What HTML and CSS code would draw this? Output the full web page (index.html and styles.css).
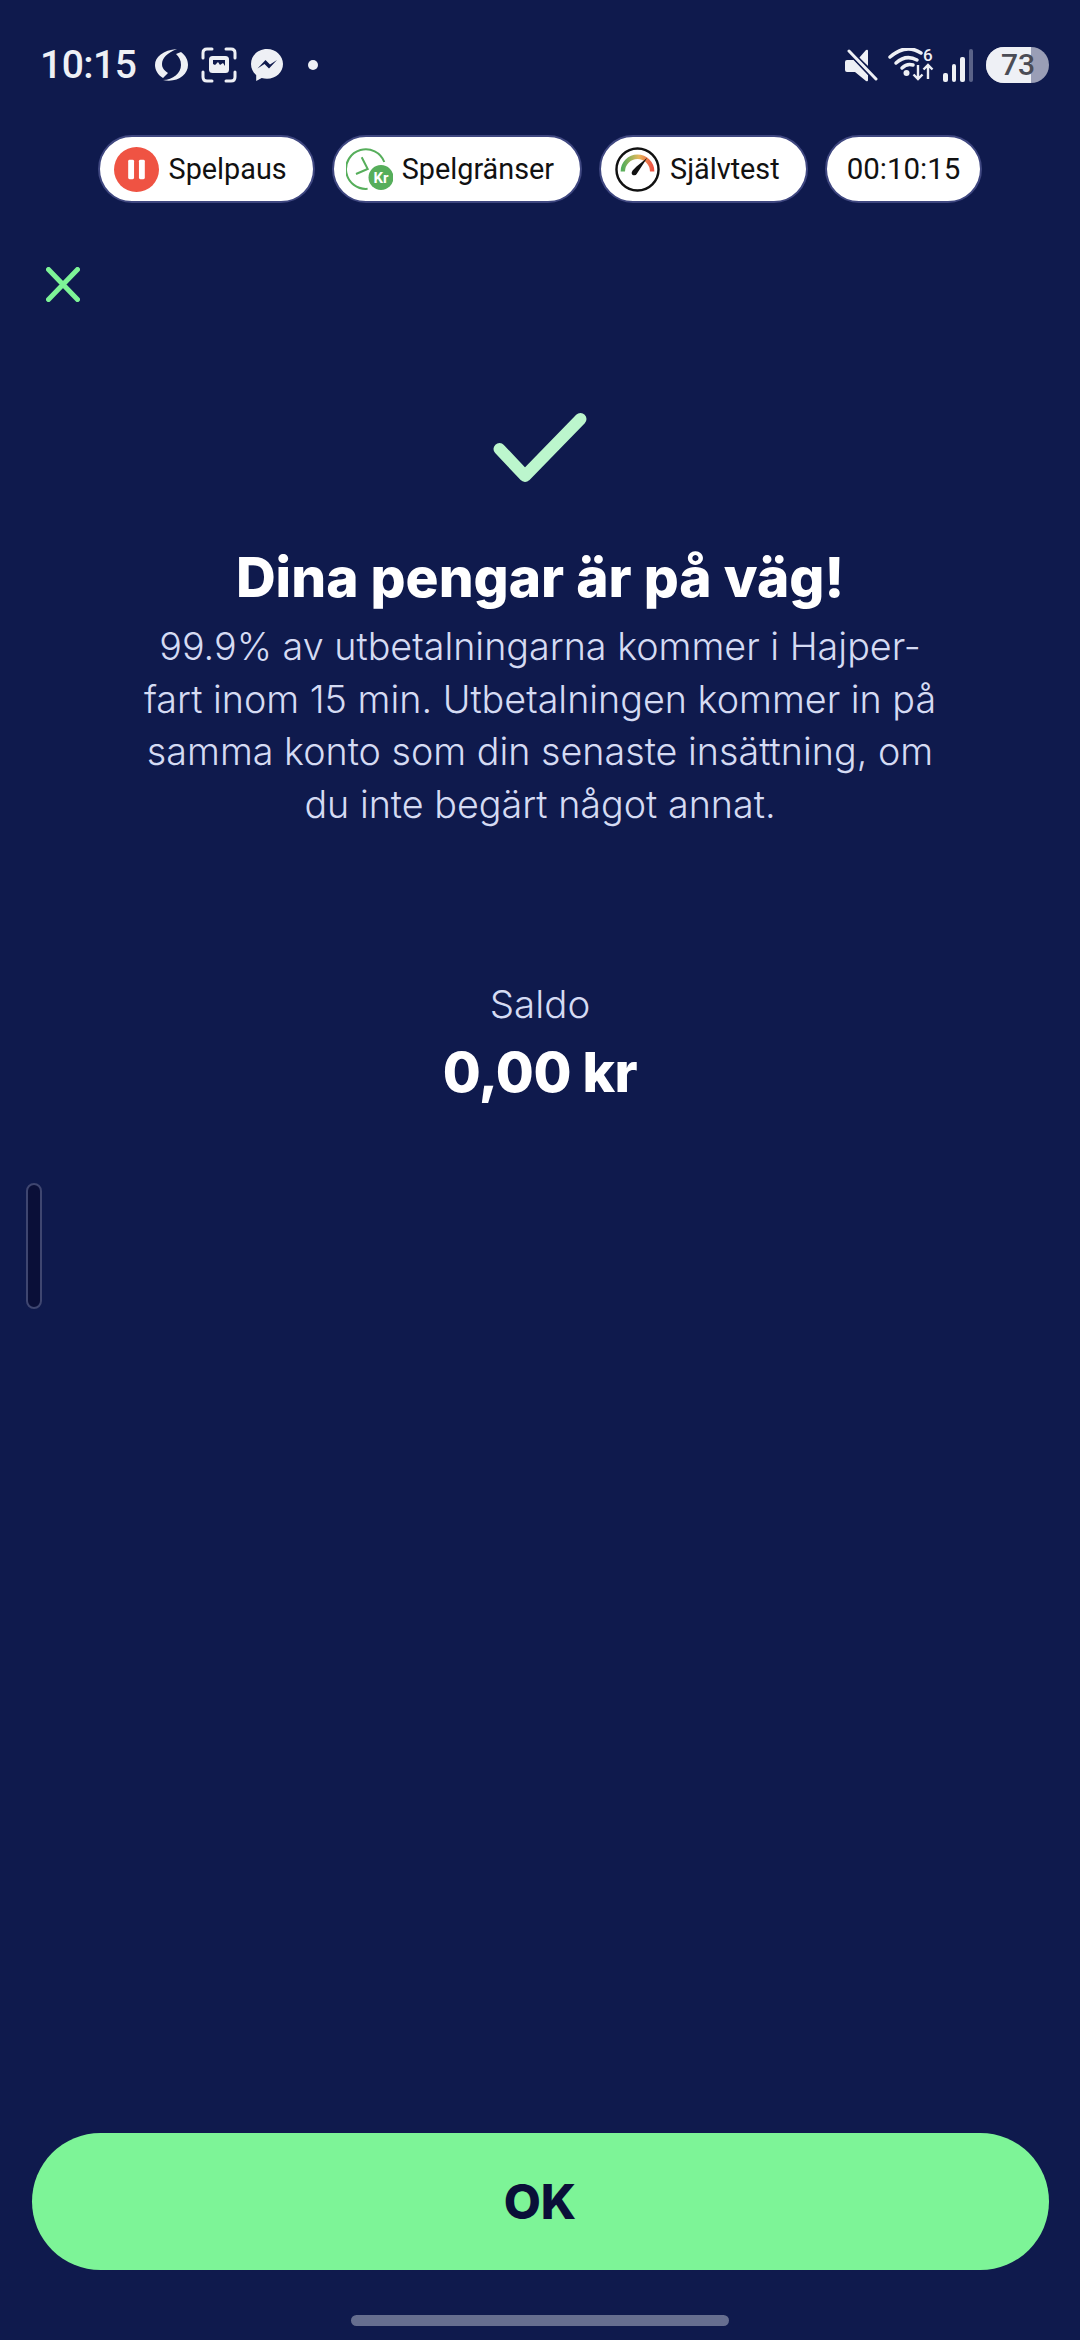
FILE: index.html
```html
<!doctype html>
<html lang="sv">
<head>
    <meta charset="UTF-8">
    <title>Dina pengar är på väg</title>
    <link rel="stylesheet" href="styles.css">
</head>
<body>
<div class="screen">
    <div class="status">
        <div class="status-left">
            <span class="clock">10:15</span>
            <svg class="ic-sync" viewBox="0 0 33 33">
                <path d="M22 0C8 1 0 8 0 16c0 5 3 10 8 13l5-5c-4-3-6-5-6-9C7 9 12 4 22 0z" fill="#eef0f5"/>
                <path d="M21 5l5-2c5 4 7 8 7 13 0 10-11 18-25 15 10 0 18-7 18-15 0-5-2-8-5-11z" fill="#eef0f5"/>
            </svg>
            <svg class="ic-shot" viewBox="0 0 36 36">
                <path d="M2 11V6q0-4 4-4h5M25 2h5q4 0 4 4v5M34 25v5q0 4-4 4h-5M11 34H6q-4 0-4-4v-5" fill="none" stroke="#eef0f5" stroke-width="3" stroke-linecap="round"/>
                <rect x="8" y="9" width="20" height="17" rx="3.500" fill="#eef0f5"/>
                <path d="M12 13h12v6l-2-3-3 2-2-3-3 3-2-1z" fill="#0f1a4d"/>
            </svg>
            <svg class="ic-msg" viewBox="0 0 34 34">
                <path d="M17 1C8 1 1 7.500 1 16c0 4.500 2 8.400 5.200 11v6l5.500-3c1.700.5 3.400.7 5.300.7 9 0 16-6.500 16-14.700S26 1 17 1z" fill="#eef0f5"/>
                <path d="M7.500 20.500l8-8.500 4.500 4.500 7-4.500-8 8.500-4.500-4.500z" fill="#0f1a4d"/>
            </svg>
            <span class="dot"></span>
        </div>
        <div class="status-right">
            <svg class="ic-mute" viewBox="0 0 33 33">
                <path d="M0 13q0-2 2-2h7l14 15v5q0 2-2 1L10 23H2q-2 0-2-2z" fill="#eef0f5"/>
                <path d="M14 9l7-8q2-1 2 1v15z" fill="#eef0f5"/>
                <path d="M4 2l27 28" stroke="#0f1a4d" stroke-width="6"/>
                <path d="M4 2l27 28" stroke="#eef0f5" stroke-width="3" stroke-linecap="round"/>
            </svg>
            <div class="wifi">
                <svg class="ic-wifi" viewBox="0 0 46 34">
                    <path d="M2 9Q18-5 33 5" fill="none" stroke="#eef0f5" stroke-width="3.500" stroke-linecap="round"/>
                    <path d="M8 15Q18 6 29 12" fill="none" stroke="#eef0f5" stroke-width="3.500" stroke-linecap="round"/>
                    <path d="M14 20q5-5 11-3" fill="none" stroke="#eef0f5" stroke-width="3.500" stroke-linecap="round"/>
                    <circle cx="18.500" cy="25" r="3" fill="#eef0f5"/>
                    <path d="M30 17v14M25.500 26.500L30 31l4.500-4.500M40 31V17M35.500 21.500L40 17l4.500 4.500" fill="none" stroke="#eef0f5" stroke-width="2.400"/>
                </svg>
                <span class="wifi-six">6</span>
            </div>
            <div class="signal">
                <span class="bar bar-1"></span>
                <span class="bar bar-2"></span>
                <span class="bar bar-3"></span>
                <span class="bar bar-4"></span>
            </div>
            <div class="battery">
                <span class="battery-fill"></span>
                <span class="battery-text">73</span>
            </div>
        </div>
    </div>

    <div class="pills">
        <div class="pill">
            <svg class="pill-ic" viewBox="0 0 46 46">
                <circle cx="23" cy="23" r="23" fill="#ef5343"/>
                <rect x="14.500" y="13" width="6" height="20" rx="1.500" fill="#fff"/>
                <rect x="25.500" y="13" width="6" height="20" rx="1.500" fill="#fff"/>
            </svg>
            <span>Spelpaus</span>
        </div>
        <div class="pill">
            <svg class="pill-ic pill-ic-limit" viewBox="0 0 47 42">
                <path d="M38.300 14A19.800 19.800 0 1 0 21.600 40.800" fill="none" stroke="#56ae5b" stroke-width="2"/>
                <path d="M15.700 9.300l6 11.700L10 26" fill="none" stroke="#56ae5b" stroke-width="2"/>
                <circle cx="35" cy="29.500" r="12.500" fill="#56ae5b"/>
                <text x="35" y="35" class="kr">Kr</text>
            </svg>
            <span>Spelgränser</span>
        </div>
        <div class="pill">
            <svg class="pill-ic" viewBox="0 0 46 46">
                <defs>
                    <linearGradient id="gauge" x1="0" x2="1" y1="0" y2="0">
                        <stop offset="0" stop-color="#56ae5b"/>
                        <stop offset=".55" stop-color="#e6b75a"/>
                        <stop offset="1" stop-color="#ef5343"/>
                    </linearGradient>
                </defs>
                <circle cx="23" cy="23" r="21.500" fill="#fff" stroke="#111" stroke-width="2.500"/>
                <path d="M8 25A15 15 0 0 1 38 25" fill="none" stroke="url(#gauge)" stroke-width="4.500"/>
                <path d="M33 11L22 20l-4 4q-2 3 0 4.500 3 1.500 4.500-1.500z" fill="#111"/>
            </svg>
            <span>Självtest</span>
        </div>
        <div class="pill pill-time">
            <span>00:10:15</span>
        </div>
    </div>

    <div class="close-row">
        <svg class="ic-close" viewBox="0 0 34 35">
            <path d="M2.500 2.500l29 30M31.500 2.500l-29 30" fill="none" stroke="#7df497" stroke-width="5" stroke-linecap="round"/>
        </svg>
    </div>

    <div class="result">
        <svg class="ic-check" viewBox="0 0 94 69">
            <path d="M6.500 36L32 63 87.500 6" fill="none" stroke="#bcf6cd" stroke-width="12" stroke-linecap="round" stroke-linejoin="round"/>
        </svg>
        <h1>Dina pengar är på väg!</h1>
        <p class="message">99.9% av utbetalningarna kommer i Hajper-<br>fart inom 15 min. Utbetalningen kommer in på<br>samma konto som din senaste insättning, om<br>du inte begärt något annat.</p>
        <div class="saldo-label">Saldo</div>
        <div class="saldo">0,00 kr</div>
    </div>

    <div class="handle"></div>

    <div class="bottom">
        <button class="ok">OK</button>
        <div class="nav-bar"></div>
    </div>
</div>
</body>
</html>
```

FILE: styles.css
```css
* {
    margin: 0;
    padding: 0;
    box-sizing: border-box;
}

body {
    width: 1080px;
    height: 2340px;
    background: #0f1a4d;
    font-family: "Inter", "Liberation Sans", sans-serif;
    overflow: hidden;
}

.screen {
    position: relative;
    display: flex;
    flex-direction: column;
    height: 2340px;
}

/* status bar */
.status {
    display: flex;
    justify-content: space-between;
    align-items: center;
    height: 40px;
    margin-top: 45px;
    padding: 0 31px 0 40px;
}

.status-left, .status-right {
    display: flex;
    align-items: center;
}

.clock {
    font-family: "Roboto", sans-serif;
    font-size: 39px;
    font-weight: 500;
    letter-spacing: -0.5px;
    color: #eef0f5;
    width: 112px;
}

.ic-sync { width: 33px; height: 33px; margin-left: 3px; }
.ic-shot { width: 36px; height: 36px; margin-left: 13px; }
.ic-msg { width: 34px; height: 34px; margin-left: 13px; }

.dot {
    width: 10px;
    height: 10px;
    margin-left: 24px;
    border-radius: 50%;
    background: #eef0f5;
}

.ic-mute { width: 33px; height: 33px; }

.wifi {
    position: relative;
    width: 46px;
    height: 34px;
    margin-left: 10px;
}

.ic-wifi {
    display: block;
    width: 46px;
    height: 34px;
}

.wifi-six {
    position: absolute;
    top: 0;
    left: 35px;
    font-family: "Roboto", sans-serif;
    font-size: 17px;
    font-weight: 500;
    line-height: 15px;
    color: #eef0f5;
}

.signal {
    display: flex;
    align-items: flex-end;
    gap: 4px;
    height: 33px;
    margin-left: 9px;
}

.bar {
    width: 4.500px;
    border-radius: 2px;
    background: #eef0f5;
}

.bar-1 { height: 9px; }
.bar-2 { height: 18px; }
.bar-3 { height: 25px; }
.bar-4 { height: 33px; background: #5a6288; }

.battery {
    position: relative;
    width: 63px;
    height: 36px;
    margin-left: 13px;
    border-radius: 18px;
    overflow: hidden;
    background: #9a9eb6;
}

.battery-fill {
    display: block;
    width: 45px;
    height: 100%;
    background: #eef0f5;
}

.battery-text {
    position: absolute;
    top: 0;
    left: 15px;
    font-family: "Roboto", sans-serif;
    font-size: 30px;
    font-weight: 500;
    line-height: 36px;
    color: #4b4c55;
}

/* pills */
.pills {
    display: flex;
    justify-content: center;
    gap: 17px;
    margin-top: 50px;
}

.pill {
    display: flex;
    align-items: center;
    gap: 10px;
    height: 68px;
    padding: 0 26px 0 14px;
    border: 2px solid #3f4780;
    border-radius: 34px;
    background: #fff;
    font-family: "Roboto", sans-serif;
    font-size: 28.800px;
    color: #111;
}

.pill-time {
    padding: 0 20px;
    font-size: 29.500px;
}

.pill-ic {
    width: 45px;
    height: 45px;
    flex: none;
}

.pill-ic-limit {
    width: 47px;
    height: 42px;
    margin-left: -2px;
    margin-right: -1px;
}

.kr {
    font-family: "Roboto", sans-serif;
    font-size: 15px;
    font-weight: 700;
    fill: #fff;
    text-anchor: middle;
}

.close-row {
    margin-top: 64px;
    padding-left: 46px;
}

.ic-close {
    display: block;
    width: 34px;
    height: 35px;
}

/* main message */
.result {
    display: flex;
    flex-direction: column;
    align-items: center;
    text-align: center;
}

.ic-check {
    width: 94px;
    height: 69px;
    margin-top: 111px;
}

h1 {
    margin-top: 64px;
    font-size: 55px;
    font-weight: 800;
    line-height: 62px;
    color: #fff;
}

.message {
    margin-top: 12px;
    font-size: 37.700px;
    font-weight: 300;
    line-height: 52.500px;
    color: #d5dbf3;
}

.saldo-label {
    margin-top: 151px;
    font-size: 38.500px;
    font-weight: 300;
    line-height: 46px;
    color: #d5dbf3;
}

.saldo {
    margin-top: 14px;
    font-size: 55px;
    font-weight: 800;
    line-height: 62px;
    letter-spacing: -0.5px;
    color: #fff;
}

.handle {
    position: absolute;
    left: 26px;
    top: 1183px;
    width: 16px;
    height: 126px;
    border: 2px solid #3f4670;
    border-radius: 8px;
    background: #0a0f38;
}

/* bottom button */
.bottom {
    display: flex;
    flex-direction: column;
    align-items: center;
    margin-top: auto;
    padding-bottom: 14px;
}

.ok {
    width: 1017px;
    height: 137px;
    border: 0;
    border-radius: 68.500px;
    background: #7df497;
    font-family: "Inter", "Liberation Sans", sans-serif;
    font-size: 48px;
    font-weight: 800;
    color: #0a0f38;
}

.nav-bar {
    width: 378px;
    height: 11px;
    margin-top: 45px;
    border-radius: 5.500px;
    background: #666e8f;
}
```
